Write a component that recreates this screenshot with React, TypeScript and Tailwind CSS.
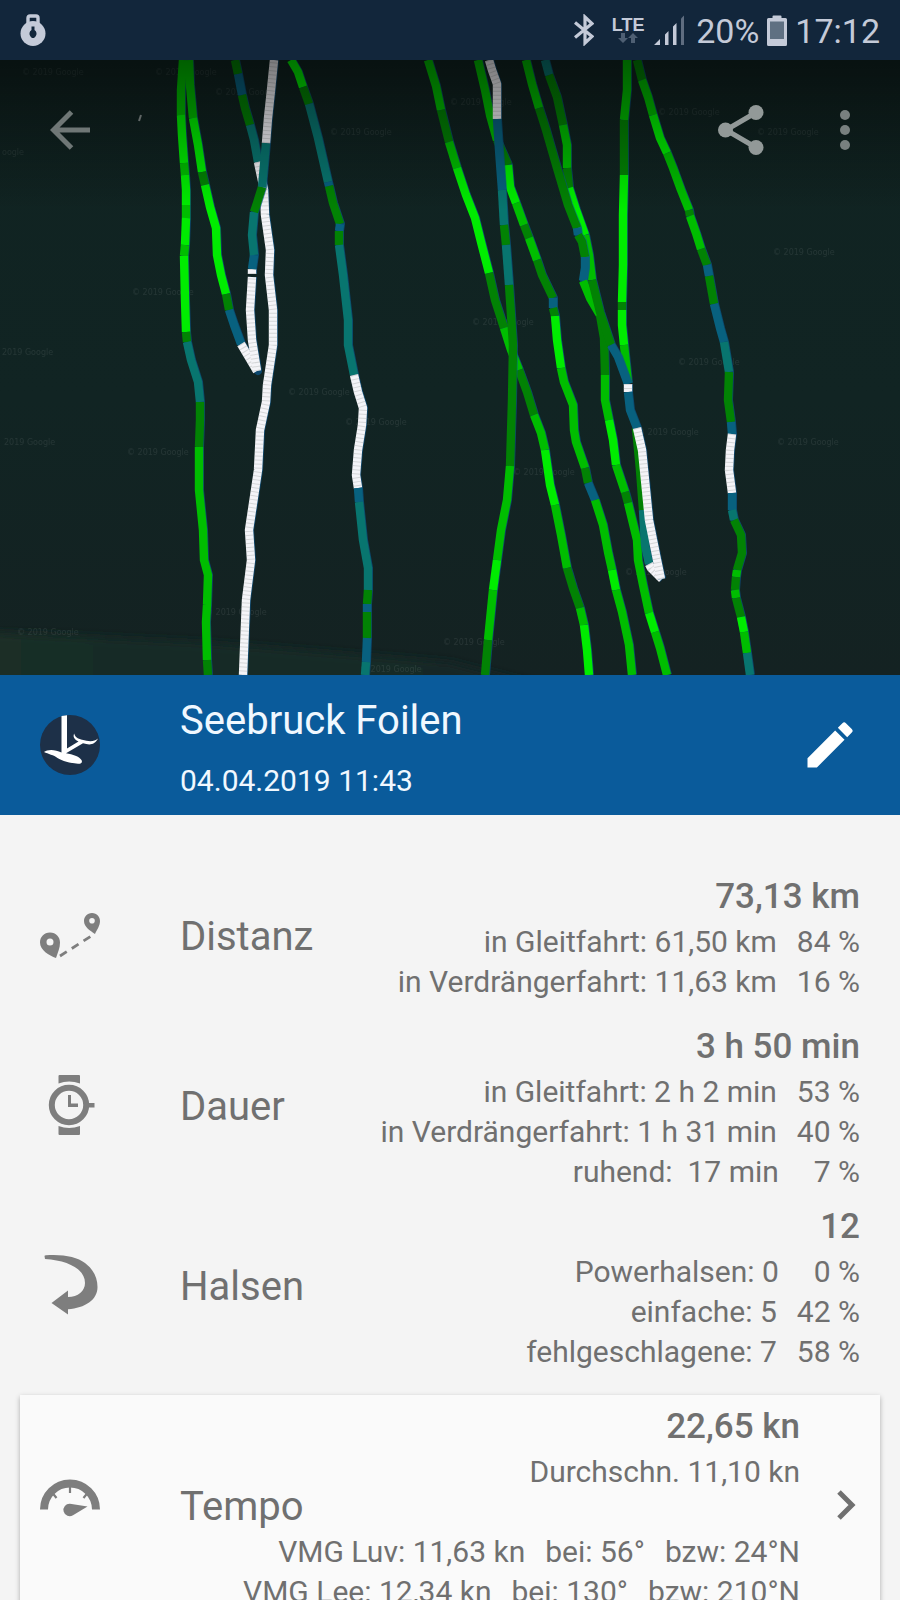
import React from "react";

const COLORS: Record<string, string> = {
  G: "#00ec00",
  g: "#00bd00",
  d: "#028204",
  t: "#08756f",
  b: "#08617f",
  w: "#f4f4f8",
};

/* Each track is a list of "colour x,y x,y ..." runs; a run starts where the last one ended. */
const TRACKS: string[] = [
  "g 183,60 181,90 181,115|G 182,135 184,163|g 185,175|G 186,190 186,205|g 186,218|G 185,245|g 184,256|G 185,300 186,332|d 187,342|t 191,360 198,382 200,402|d 200,420 199,447|g 199,470 199,490 203,530 204,560 208,575 207,605 206,622 207,660|d 208,675",
  "d 235,60 238,74|b 242,95|d 245,108 250,125|t 254,140 258,162|w 264,190 265,215 270,250 269,275 273,310 273,345 267,385 266,402 260,430 258,470 252,510 249,530 251,560 246,600 244,650 243,675",
  "g 189,60 190,85 193,118|G 198,145 202,172|d 205,185|G 210,207 216,228 217,255 221,275 226,294|d 229,310|b 234,325 241,344|w 257,371|w 252,340 250,310 252,277",
  "w 252,274 252,269|b 254,255|t 252,235 254,212|d 257,203 262,187|t 264,165 266,143",
  "w 266,143 268,118 271,90 274,60",
  "G 291,60 298,72 303,87|d 309,104|t 318,138 328,182|b 329,186|d 333,203 340,224|b 339,231|d 339,245|t 343,275 348,320 348,345 354,375",
  "w 354,375 358,392 363,408 362,425 358,450 356,475 358,488|b 359,502|t 363,540 368,568 368,590|d 367,604|b 367,612|d 367,638|b 366,662|t 365,675",
  "g 428,60 436,86 441,110|d 449,142|g 457,168|G 466,195 475,218 481,242 489,273|d 495,300 504,328|g 511,350 519,370|d 527,392 534,415|g 541,433 545,450|G 550,485 555,505|g 561,535 567,568|d 573,588 580,608|g 584,625|G 587,650 589,675",
  "d 478,60|g 485,90 490,115 497,140|d 508,165|G 510,187 516,203|g 524,225|d 529,238|g 537,260|d 542,275 553,298|b 553,308|d 555,316|G 557,340 561,368|g 564,382 573,405 574,430 576,442 585,468|d 588,483|b 595,500|g 603,525 608,552 612,570|G 616,590|g 622,612 629,645 632,675",
  "w 489,60 492,70 497,84 497,119|b 499,150 502,190|t 504,225|d 506,245|t 509,285|d 511,315 513,345 512,400 510,466|g 507,500 501,530 497,560|G 493,590|g 488,640|d 485,675",
  "d 545,60|t 549,75|d 557,97 563,125|g 567,145 567,168|d 569,188|G 576,210 585,235|g 589,255 592,280",
  "g 526,60 532,84 539,108|d 546,130 557,168 568,205 577,228|b 578,235|d 582,242 585,257|b 585,268 583,281|g 590,298 600,315|d 604,338 605,375|g 605,400 609,420|G 613,440 616,465|g 625,492|d 628,503|g 637,540 638,560 643,585 649,613|G 655,632|g 660,648 667,675",
  "g 627,60 627,90 624,120|d 624,175|G 623,215 623,265 622,302|d 622,310|G 622,325 624,345|g 628,383",
  "d 592,280 600,312 611,345|b 618,357 628,384",
  "w 628,384 628,392",
  "d 636,428 640,470 643,510|t 645,545 649,564|w 651,568 662,579",
  "b 628,392 630,410 637,428|w 642,450 645,480 649,520 656,555 661,579",
  "d 637,60 642,80|g 648,97 653,115|G 660,138 667,153|g 673,168 681,190 689,210|d 690,216|g 696,233 701,249|d 707,265|b 709,276|d 714,304|b 720,328 724,342|t 729,372|d 728,400 731,422|b 732,434|w 730,450 729,470 732,493|b 732,510|t 734,520|d 741,535 742,553 737,570|g 736,577|d 735,590|g 736,598|d 741,617|G 744,632|g 747,653|t 750,675",
];

const WATERMARKS: [number, number, string?][] = [
  [22, 75], [155, 75], [215, 95], [330, 135], [2, 155, "oogle"], [132, 295], [2, 355, "2019 Google"],
  [288, 395], [345, 425], [4, 445, "2019 Google"], [127, 455], [17, 635], [205, 615], [360, 672],
  [450, 105], [658, 115], [757, 135], [773, 255], [472, 325], [678, 365],
  [637, 435], [777, 445], [513, 475], [625, 575], [443, 645],
];

function Track({ spec }: { spec: string }) {
  const runs: { color: string; points: string }[] = [];
  let last = "";
  for (const part of spec.split("|")) {
    const [color, ...pts] = part.split(" ");
    runs.push({ color, points: [last, ...pts].join(" ").trim() });
    last = pts[pts.length - 1];
  }
  const all = spec.replace(/[a-zA-Z|]/g, " ").trim();
  return (
    <g fill="none" strokeLinejoin="round">
      <polyline points={all} stroke="#0a558c" strokeWidth="8" transform="translate(1 0)" opacity="0.7" />
      {runs.map((r, i) => (
        <g key={i}>
          <polyline points={r.points} stroke={COLORS[r.color]} strokeWidth="8.400" />
          {r.color === "w" && (
            <polyline points={r.points} stroke="#9aa09e" strokeWidth="8.400" strokeDasharray="1 3" opacity="0.35" />
          )}
        </g>
      ))}
    </g>
  );
}

function TrackMap() {
  return (
    <svg className="block h-full w-full" viewBox="0 60 900 615" preserveAspectRatio="xMidYMid slice" role="img" aria-label="Karte">
      <defs>
        <linearGradient id="shade" x1="0" y1="0" x2="0" y2="1">
          <stop offset="0" stopColor="#000" stopOpacity="0.5" />
          <stop offset="0.5" stopColor="#000" stopOpacity="0.25" />
          <stop offset="1" stopColor="#000" stopOpacity="0" />
        </linearGradient>
        <linearGradient id="shore" x1="0" y1="0" x2="1" y2="0">
          <stop offset="0" stopColor="#1a2e27" />
          <stop offset="1" stopColor="#162726" />
        </linearGradient>
        <linearGradient id="water" x1="0" y1="0" x2="0" y2="1">
          <stop offset="0" stopColor="#102321" />
          <stop offset="0.55" stopColor="#112423" />
          <stop offset="1" stopColor="#142222" />
        </linearGradient>
        <filter id="soft"><feGaussianBlur stdDeviation="4" /></filter>
      </defs>
      <rect x="0" y="60" width="900" height="615" fill="url(#water)" />
      <path d="M-20 632 L200 642 L450 662 L560 690 L-20 690Z" fill="url(#shore)" filter="url(#soft)" />
      <g fill="#fff" opacity="0.08" fontFamily="DejaVu Sans, sans-serif" fontSize="8">
        {WATERMARKS.map(([x, y, text]) => (
          <text key={x + "-" + y} x={x} y={y}>{text ?? "© 2019 Google"}</text>
        ))}
      </g>
      {TRACKS.map((t) => <Track key={t} spec={t} />)}
      <path d="M139 121 L141 115" stroke="#8b9493" strokeWidth="2" />
      <rect x="0" y="60" width="900" height="150" fill="url(#shade)" />
    </svg>
  );
}

function StatusBar() {
  return (
    <div className="flex h-[60px] shrink-0 items-center justify-between bg-[#12263b] px-5 text-[#c4cad8]">
      <svg width="26" height="34" viewBox="0 0 26 34" fill="none" aria-hidden="true">
        <path d="M8 10 V5 Q8 3 10 3 H16 Q18 3 18 5 V10" stroke="currentColor" strokeWidth="3.4" />
        <circle cx="13" cy="20.500" r="12.500" fill="currentColor" />
        <path d="M11.500 13.500 h3 v3.500 a4.300 4.300 0 0 1 1 6.500 l-1.500 1.500 h-2 l-1.500 -1.500 a4.300 4.300 0 0 1 1 -6.500z" fill="#12263b" />
      </svg>
      <div className="flex items-center gap-2">
        <svg className="mr-2" width="20" height="32" viewBox="0 0 20 32" fill="none" stroke="currentColor" strokeWidth="3.200" aria-hidden="true">
          <path d="M1 8.500 L18 22.500 L11 29 V3 L18 9.500 L1 23.500" />
        </svg>
        <div className="flex w-9 flex-col items-center">
          <span className="font-['Liberation_Sans'] text-[18px] leading-4 font-bold">LTE</span>
          <svg width="20" height="10" viewBox="0 0 20 10" fill="#4e5f73" aria-hidden="true">
            <path d="M3 0h4v5h3l-5 5-5-5h3z M13 10h4V5h3l-5-5-5 5h3z" />
          </svg>
        </div>
        <svg className="mr-1" width="30" height="30" viewBox="0 0 30 30" fill="currentColor" aria-hidden="true">
          <path d="M0 30 L6 24 V30Z M11 19.500 L14.500 16 V30 H11Z M19 11.500 L22.500 8 V30 H19Z" />
          <path d="M27 3.500 L30 0.500 V30 H27Z" fill="#5f6d80" />
        </svg>
        <span className="pt-0.5 text-[34px] leading-10">20%</span>
        <svg width="20" height="31" viewBox="0 0 20 31" aria-hidden="true">
          <path d="M5.500 3 V1.500 Q5.500 .5 6.500 .5 H13.500 Q14.500 .5 14.500 1.500 V3 H18.500 Q20 3 20 4.500 V29.500 Q20 31 18.500 31 H1.500 Q0 31 0 29.500 V4.500 Q0 3 1.500 3Z" fill="currentColor" />
          <path d="M3 6.500 H17 V24 H3Z" fill="#5f7082" />
        </svg>
        <span className="pt-0.5 text-[34px] leading-10">17:12</span>
      </div>
    </div>
  );
}

const RouteIcon = () => (
  <svg width="60" height="60" viewBox="0 0 60 60" aria-hidden="true">
    <g transform="translate(0 5)">
      <path fillRule="evenodd" fill="currentColor" d="M10 22.500 C4 22.500 0 27 0 32.500 C0 40 9 45.500 16 48 C18 42 20 38 20 32.500 C20 27 16 22.500 10 22.500Z M10 28.500 a3.500 3.500 0 1 1 0 7 a3.500 3.500 0 0 1 0-7Z" />
      <path fillRule="evenodd" fill="currentColor" d="M52 3 C47 3 44 7 44 11 C44 17 50 20.500 55 24 C57 19.500 60 16 60 11 C60 7 57 3 52 3Z M52 8 a2.800 2.800 0 1 1 0 5.600 a2.800 2.800 0 0 1 0-5.600Z" />
      <path d="M20 46 L52 25.500" stroke="currentColor" strokeWidth="2.800" strokeDasharray="8 6" fill="none" />
    </g>
  </svg>
);

const WatchIcon = () => (
  <svg width="60" height="60" viewBox="0 0 60 60" aria-hidden="true">
    <g fill="currentColor">
      <path d="M18.500 1 Q18.500 0 19.500 0 H39 Q40 0 40 1 V8.500 Q29 4.500 18.500 8.500Z" />
      <path d="M18.500 59 Q18.500 60 19.500 60 H39 Q40 60 40 59 V51 Q29 55 18.500 51Z" />
      <path d="M47 28 H54.500 V32.500 H47Z M28 20 H31 V28.500 H38 V32 H28Z" />
    </g>
    <circle cx="29" cy="30" r="17.200" fill="none" stroke="currentColor" strokeWidth="6" />
  </svg>
);

const JibeIcon = () => (
  <svg width="60" height="60" viewBox="0 0 60 60" aria-hidden="true">
    <path fill="currentColor" d="M4.500 1 Q4.500 .3 6 .3 C23 -1 37 2 45 8 C54 15 57.500 23 57.500 32 C57.500 45 45 53 28 54.200 V59.500 L11.500 48 L28 35.500 V42 C38 42 45 36 45 28 C45 14 28 5.500 5 4 Z" />
  </svg>
);

const GaugeIcon = () => (
  <svg width="60" height="60" viewBox="0 0 60 60" aria-hidden="true">
    <g transform="translate(0 -5)">
      <path d="M4 39.500 A26 26 0 0 1 56 39.500" fill="none" stroke="currentColor" strokeWidth="8" />
      <path d="M30 16 V23 M12.500 23 L16.500 28 M47.500 23 L43.500 28" stroke="currentColor" strokeWidth="2.200" fill="none" />
      <path fill="currentColor" d="M47.500 36.500 L33 45.200 A6.200 6.200 0 1 1 30 33.800Z" />
    </g>
  </svg>
);

interface Stat {
  name: string;
  icon: React.ReactNode;
  total: string;
  lines: string[][];
}

const STATS: Stat[] = [
  { name: "Distanz", icon: <RouteIcon />, total: "73,13 km", lines: [["in Gleitfahrt: 61,50 km", "84 %"], ["in Verdrängerfahrt: 11,63 km", "16 %"]] },
  { name: "Dauer", icon: <WatchIcon />, total: "3 h 50 min", lines: [["in Gleitfahrt: 2 h 2 min", "53 %"], ["in Verdrängerfahrt: 1 h 31 min", "40 %"], ["ruhend:  17 min", "  7 %"]] },
  { name: "Halsen", icon: <JibeIcon />, total: "12", lines: [["Powerhalsen: 0", "  0 %"], ["einfache: 5", "42 %"], ["fehlgeschlagene: 7", "58 %"]] },
];

const TEMPO: Stat = {
  name: "Tempo",
  icon: <GaugeIcon />,
  total: "22,65 kn",
  lines: [["Durchschn. 11,10 kn"], [" "], ["VMG Luv: 11,63 kn", "bei: 56°", "bzw: 24°N"], ["VMG Lee: 12,34 kn", "bei: 130°", "bzw: 210°N"]],
};

function Values({ stat }: { stat: Stat }) {
  return (
    <div className="col-start-1 row-start-1 text-right whitespace-pre">
      <p className="text-[35px] leading-[50px] font-medium">{stat.total}</p>
      {stat.lines.map((parts) => (
        <p key={parts[0]} className="flex justify-end gap-5 text-[30px] leading-10">
          {parts.map((part) => <span key={part}>{part}</span>)}
        </p>
      ))}
    </div>
  );
}

function Label({ stat }: { stat: Stat }) {
  return (
    <div className="col-start-1 row-start-1 flex items-center gap-20">
      <span className="mb-1 text-[#7e7e7e]">{stat.icon}</span>
      <h2 className="text-[40px] leading-[48px]">{stat.name}</h2>
    </div>
  );
}

export default function App() {
  return (
    <div className="flex h-screen flex-col overflow-hidden bg-[#f4f4f4] font-[Roboto,sans-serif] text-[#707070]">
      <StatusBar />
      <header className="relative h-[615px] shrink-0 overflow-hidden bg-[#102321]">
        <TrackMap />
        <div className="absolute inset-x-0 top-0 flex h-[140px] items-center justify-between pr-[31px] pl-10">
          <button aria-label="Zurück" className="grid size-[60px] place-items-center text-[#6f7776]">
            <svg width="40" height="40" viewBox="0 0 40 40" fill="none" stroke="currentColor" strokeWidth="5" aria-hidden="true">
              <path d="M40 20 H4 M21.500 2 L3.500 20 L21.500 38" />
            </svg>
          </button>
          <div className="flex items-center gap-[50px]">
            <button aria-label="Teilen" className="grid size-[60px] place-items-center text-[#929998]">
              <svg width="46" height="50" viewBox="0 0 46 50" fill="currentColor" aria-hidden="true">
                <path d="M38 7.500 L8 25 L38 42.500" fill="none" stroke="currentColor" strokeWidth="5" />
                <circle cx="38" cy="7.500" r="7.500" /><circle cx="7.500" cy="25" r="7.500" /><circle cx="38" cy="42.500" r="7.500" />
              </svg>
            </button>
            <button aria-label="Mehr" className="grid h-[60px] w-12 place-items-center text-[#78807f]">
              <svg width="10" height="40" viewBox="0 0 10 40" fill="currentColor" aria-hidden="true">
                <circle cx="5" cy="5" r="5" /><circle cx="5" cy="20" r="5" /><circle cx="5" cy="35" r="5" />
              </svg>
            </button>
          </div>
        </div>
      </header>
      <section className="flex h-[140px] shrink-0 items-center gap-20 bg-[#0a5b9b] px-10 text-[#f0f8ff]">
        <svg width="60" height="60" viewBox="0 0 60 60" aria-hidden="true">
          <circle cx="30" cy="30" r="30" fill="#1d3048" />
          <g fill="#fff">
            <path d="M21.500 1 L27 .3 V33.500 L38.500 26.500 C34.500 24.500 32.500 22 34.200 18.500 C35 22 37.500 23.500 42 24.800 C49 26.600 54 27 58 23.500 C54.500 30 50 30.300 43 28.300 L26 38.200 C33 39.500 39 41 41.500 45 C42.500 47 42 49 38 48.800 C30 48 22 46 17.500 43 C14 40 8 39 4 37 C7 34.200 15 34 21.500 37.500Z" />
          </g>
        </svg>
        <div className="min-w-0 flex-1 pt-3">
          <h1 className="text-[40px] leading-[60px]">Seebruck Foilen</h1>
          <p className="text-[30px] leading-[60px]">04.04.2019 11:43</p>
        </div>
        <button aria-label="Bearbeiten" className="grid size-[60px] place-items-center text-white">
          <svg width="60" height="60" viewBox="0 0 24 24" fill="currentColor" aria-hidden="true">
            <path d="M3 17.250V21h3.750L17.810 9.940l-3.750-3.750L3 17.250z M20.710 7.040a1 1 0 0 0 0-1.410l-2.340-2.340a1 1 0 0 0-1.410 0l-1.830 1.830 3.750 3.750 1.830-1.830z" />
          </svg>
        </button>
      </section>
      <main className="min-h-0 flex-1 overflow-y-auto pt-[42px] [scrollbar-width:none]">
        {STATS.map((s) => (
          <section key={s.name} className="grid min-h-[160px] items-center px-10 py-[5px]">
            <Label stat={s} />
            <Values stat={s} />
          </section>
        ))}
        <a href="#tempo" className="mx-5 mt-[18px] mb-5 flex items-center bg-[#fafafa] py-[7px] pr-[22px] pl-5 shadow-[0_2px_5px_rgba(0,0,0,0.3)]">
          <div className="grid flex-1 items-center">
            <Label stat={TEMPO} />
            <Values stat={TEMPO} />
          </div>
          <svg className="mb-1 ml-9 shrink-0" width="22" height="30" viewBox="0 0 22 30" fill="none" stroke="currentColor" strokeWidth="5" aria-hidden="true">
            <path d="M3 2 L16 15 L3 28" />
          </svg>
        </a>
      </main>
    </div>
  );
}
